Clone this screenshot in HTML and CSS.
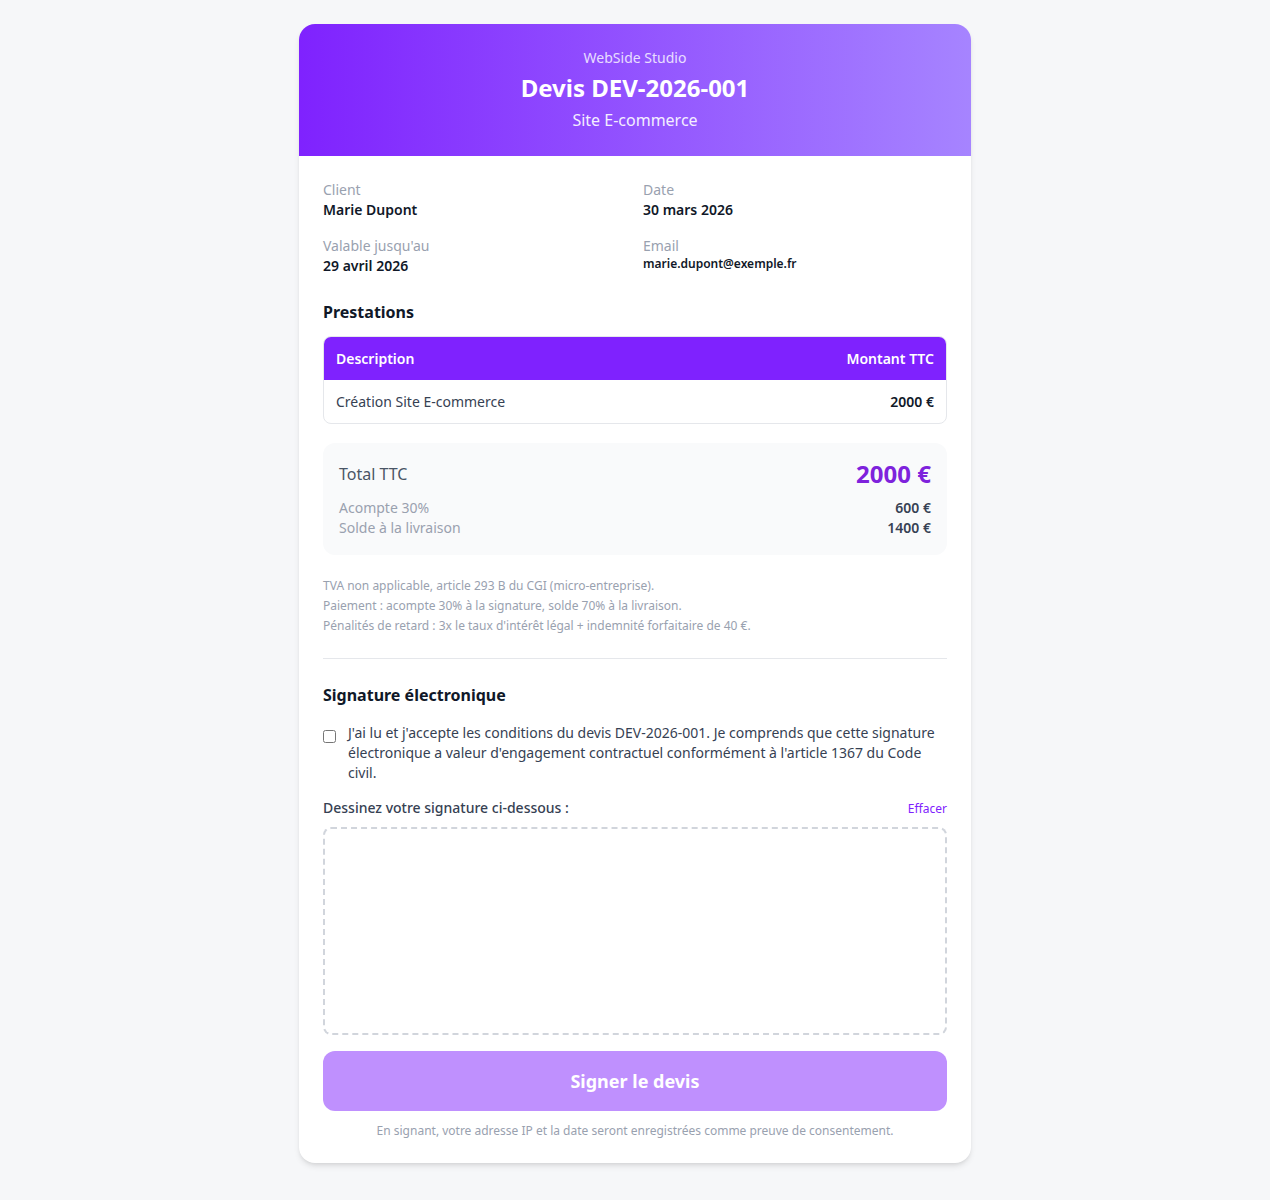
FILE: index.html
```html
<!DOCTYPE html>
<html lang="fr">
<head>
<meta charset="utf-8">
<title>Devis DEV-2026-001</title>
<link rel="stylesheet" href="styles.css">
</head>
<body>
<main class="card">
  <header class="hero">
    <div class="studio">WebSide Studio</div>
    <h1 class="title">Devis DEV-2026-001</h1>
    <div class="subtitle">Site E-commerce</div>
  </header>
  <section class="body">
    <div class="info">
      <div><div class="label">Client</div><div class="value">Marie Dupont</div></div>
      <div><div class="label">Date</div><div class="value">30 mars 2026</div></div>
      <div><div class="label">Valable jusqu'au</div><div class="value">29 avril 2026</div></div>
      <div><div class="label">Email</div><div class="value email">marie.dupont@exemple.fr</div></div>
    </div>

    <h2 class="section-title">Prestations</h2>
    <div class="table">
      <div class="thead"><span>Description</span><span>Montant TTC</span></div>
      <div class="trow"><span>Création Site E-commerce</span><span class="amount">2000 €</span></div>
    </div>

    <div class="totals">
      <div class="total-row"><span class="total-label">Total TTC</span><span class="total-value">2000 €</span></div>
      <div class="sub-row"><span>Acompte 30%</span><span class="sub-value">600 €</span></div>
      <div class="sub-row"><span>Solde à la livraison</span><span class="sub-value">1400 €</span></div>
    </div>

    <div class="notes">
      <p>TVA non applicable, article 293 B du CGI (micro-entreprise).</p>
      <p>Paiement : acompte 30% à la signature, solde 70% à la livraison.</p>
      <p>Pénalités de retard : 3x le taux d'intérêt légal + indemnité forfaitaire de 40 €.</p>
    </div>

    <hr class="divider">

    <h2 class="section-title sig-title">Signature électronique</h2>
    <label class="consent">
      <input type="checkbox" class="check">
      <span>J'ai lu et j'accepte les conditions du devis DEV-2026-001. Je comprends que cette signature électronique a valeur d'engagement contractuel conformément à l'article 1367 du Code civil.</span>
    </label>

    <div class="pad-head">
      <span class="pad-label">Dessinez votre signature ci-dessous :</span>
      <button class="clear" type="button">Effacer</button>
    </div>
    <div class="pad"></div>

    <button class="sign" type="button">Signer le devis</button>
    <p class="footnote">En signant, votre adresse IP et la date seront enregistrées comme preuve de consentement.</p>
  </section>
</main>
</body>
</html>
```

FILE: styles.css
```css
* { box-sizing: border-box; }
html, body { margin: 0; padding: 0; }
body {
  background: #f6f7f9;
  font-family: "Noto Sans", "Open Sans", sans-serif;
  color: #111827;
  padding: 24px 0 37px;
}
.card {
  width: 672px;
  margin: 0 auto;
  background: #fff;
  border-radius: 16px;
  overflow: hidden;
  box-shadow: 0 4px 6px -1px rgba(0,0,0,0.10), 0 2px 4px -2px rgba(0,0,0,0.10);
}
.hero {
  background: linear-gradient(90deg, #7f22fe 0%, #a684ff 100%);
  color: #fff;
  text-align: center;
  padding: 24px;
}
.studio { font-size: 14px; line-height: 20px; opacity: 0.8; }
.title { margin: 4px 0 0; font-size: 24px; line-height: 32px; font-weight: 700; }
.subtitle { margin-top: 4px; font-size: 16px; line-height: 24px; opacity: 0.9; }

.body { padding: 24px; }
.info {
  display: grid;
  grid-template-columns: 1fr 1fr;
  column-gap: 16px;
  row-gap: 16px;
}
.label { font-size: 14px; line-height: 20px; color: #99a1af; }
.value { font-size: 14px; line-height: 20px; font-weight: 600; color: #101828; }
.value.email { font-size: 12px; line-height: 16px; }

.section-title { margin: 24px 0 12px; font-size: 16px; line-height: 24px; font-weight: 700; color: #101828; }

.table { border: 1px solid #e5e7eb; border-radius: 8px; overflow: hidden; }
.thead, .trow {
  display: flex;
  justify-content: space-between;
  align-items: center;
  height: 43px;
  padding: 0 12px;
  font-size: 14px;
}
.thead { background: #7f22fe; color: #fff; font-weight: 600; }
.trow { color: #364153; }
.amount { font-weight: 600; color: #101828; }

.totals {
  margin-top: 19px;
  background: #f9fafb;
  border-radius: 12px;
  padding: 15px 16px 17px;
}
.total-row { display: flex; justify-content: space-between; align-items: center; line-height: 32px; }
.total-label { font-size: 16px; color: #4a5565; }
.total-value { font-size: 24px; font-weight: 700; color: #7e22dc; }
.sub-row { display: flex; justify-content: space-between; font-size: 14px; line-height: 20px; color: #99a1af; }
.total-row + .sub-row { margin-top: 8px; }
.sub-value { font-weight: 600; color: #364153; }

.notes { margin-top: 21px; font-size: 12px; line-height: 20px; color: #99a1af; }
.notes p { margin: 0; }

.divider { border: 0; border-top: 1px solid #e5e7eb; margin: 22px 0 0; }
.sig-title { margin-top: 24px; margin-bottom: 16px; }

.consent { display: flex; align-items: flex-start; gap: 12px; font-size: 14px; line-height: 20px; color: #364153; }
.check { margin: 7px 0 0; width: 13px; height: 13px; flex: none; }

.pad-head { margin-top: 15px; display: flex; justify-content: space-between; align-items: center; }
.pad-label { font-size: 14px; line-height: 20px; font-weight: 500; color: #364153; }
.clear { background: none; border: 0; padding: 0; font: inherit; font-size: 12px; color: #7f22fe; cursor: pointer; }
.pad {
  margin-top: 9px;
  height: 208px;
  border: 2px dashed #d1d5dc;
  border-radius: 8px;
}
.sign {
  display: block;
  width: 100%;
  margin-top: 16px;
  height: 60px;
  border: 0;
  border-radius: 12px;
  background: #bf90fe;
  color: #fff;
  font-family: inherit;
  font-size: 18px;
  font-weight: 700;
}
.footnote { margin: 12px 0 0; text-align: center; font-size: 12px; line-height: 16px; color: #99a1af; }
```
